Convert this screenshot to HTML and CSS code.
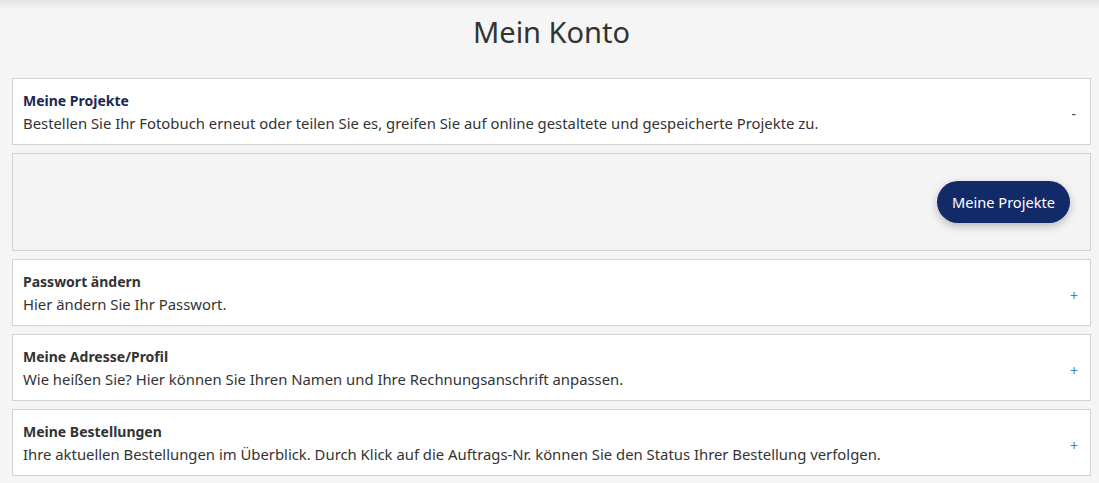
FILE: index.html
```html
<!DOCTYPE html>
<html lang="de">
<head>
<meta charset="utf-8">
<title>Mein Konto</title>
<link rel="stylesheet" href="styles.css">
</head>
<body>
<div class="topshade"></div>
<main class="page">
  <h1 class="title">Mein Konto</h1>
  <section class="card">
    <div class="card-text">
      <div class="card-head navy">Meine Projekte</div>
      <div class="card-desc">Bestellen Sie Ihr Fotobuch erneut oder teilen Sie es, greifen Sie auf online gestaltete und gespeicherte Projekte zu.</div>
    </div>
    <span class="toggle minus">-</span>
  </section>
  <section class="panel">
    <button class="btn">Meine Projekte</button>
  </section>
  <section class="card">
    <div class="card-text">
      <div class="card-head">Passwort ändern</div>
      <div class="card-desc">Hier ändern Sie Ihr Passwort.</div>
    </div>
    <span class="toggle">+</span>
  </section>
  <section class="card">
    <div class="card-text">
      <div class="card-head">Meine Adresse/Profil</div>
      <div class="card-desc">Wie heißen Sie? Hier können Sie Ihren Namen und Ihre Rechnungsanschrift anpassen.</div>
    </div>
    <span class="toggle">+</span>
  </section>
  <section class="card">
    <div class="card-text">
      <div class="card-head">Meine Bestellungen</div>
      <div class="card-desc">Ihre aktuellen Bestellungen im Überblick. Durch Klick auf die Auftrags-Nr. können Sie den Status Ihrer Bestellung verfolgen.</div>
    </div>
    <span class="toggle">+</span>
  </section>
</main>
</body>
</html>
```

FILE: styles.css
```css
html, body {
  margin: 0;
  padding: 0;
  background: #f5f5f5;
  font-family: "Noto Sans", "Open Sans", sans-serif;
  color: #333;
}
.topshade {
  height: 10px;
  margin-bottom: -10px;
  background: linear-gradient(#e4e4e4, rgba(245,245,245,0));
}
.page {
  padding: 0 8px 0 12px;
  display: flex;
  flex-direction: column;
  gap: 8px;
}
.title {
  margin: 13px 0 19px;
  text-align: center;
  font-weight: 400;
  font-size: 29px;
  line-height: 38px;
  color: #333;
}
.card {
  background: #fff;
  border: 1px solid #d2d2d2;
  padding: 11px 12px 10px 10px;
  display: flex;
  align-items: center;
  justify-content: space-between;
}
.card-head {
  font-weight: 700;
  font-size: 14px;
  line-height: 22px;
  color: #333;
}
.card-head.navy { color: #1c2850; }
.card-desc {
  font-size: 14.85px;
  line-height: 22px;
  color: #333;
}
.toggle {
  font-size: 14px;
  color: #3f82b8;
  line-height: 14px;
  margin-top: 5px;
}
.toggle.minus { color: #444; margin-right: 2px; margin-top: 3px; }
.panel {
  background: #f4f4f4;
  border: 1px solid #d2d2d2;
  height: 96px;
  display: flex;
  align-items: center;
  justify-content: flex-end;
  padding-right: 20px;
}
.btn {
  font-family: "Noto Sans", "Open Sans", sans-serif;
  background: #132a69;
  color: #fff;
  border: none;
  border-radius: 22px;
  height: 42px;
  padding: 0 15px;
  font-size: 14.6px;
  box-shadow: 0 3px 8px rgba(0,0,0,0.25);
}
```
